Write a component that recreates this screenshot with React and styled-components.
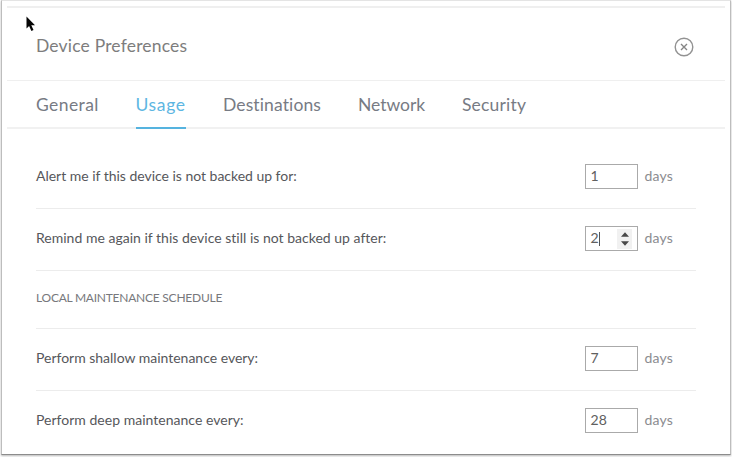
import React from "react";
import styled, { createGlobalStyle } from "styled-components";

const GlobalStyle = createGlobalStyle`
  *, *::before, *::after { box-sizing: border-box; }
  body {
    margin: 0;
    background: #fff;
    font-family: Lato, "Liberation Sans", sans-serif;
    font-variant-ligatures: none;
    overflow: hidden;
  }
`;

const Page = styled.main`
  width: 732px;
  height: 457px;
  padding: 0 1px 2px 1px;
`;

const Panel = styled.section`
  position: relative;
  height: 455px;
  padding: 5px 5px 0;
  border: 1px solid #bdbdbd;
  border-top-color: #e4e4e4;
  border-bottom-color: #8c8c8c;
  background: #fff;
  box-shadow: 0 1px 2px rgba(0, 0, 0, 0.28);
`;

const Header = styled.header`
  display: flex;
  align-items: center;
  justify-content: space-between;
  height: 75px;
  padding: 3px 31px 0 29px;
  border-top: 2px solid #efefef;
  border-bottom: 1px solid #efefef;
`;

const Title = styled.h1`
  margin: 0;
  color: #7d7d7d;
  font-size: 17.5px;
  font-weight: 400;
  line-height: 24px;
  letter-spacing: 0.18px;
`;

const CloseButton = styled.button`
  display: flex;
  padding: 0;
  border: 0;
  background: none;
  margin-top: 3px;
`;

const Tabs = styled.nav`
  display: flex;
  height: 48px;
  padding-left: 29px;
  border-bottom: 2px solid #f1f1f1;
`;

const Tab = styled.a`
  width: ${(p) => p.$width}px;
  height: 48px;
  margin-right: ${(p) => p.$gap}px;
  border-bottom: 2px solid ${(p) => (p.$active ? "#55b3df" : "transparent")};
  color: ${(p) => (p.$active ? "#5db6e2" : "#777b84")};
  font-size: 17.5px;
  line-height: 47px;
  letter-spacing: ${(p) => p.$tracking}px;
  white-space: nowrap;
`;

const Settings = styled.div`
  padding: 18px 29px 0 29px;
`;

const Row = styled.div`
  display: flex;
  align-items: center;
  justify-content: space-between;
  height: 62px;
  padding: 0 23px 2px 0;
  border-bottom: 1px solid ${(p) => (p.$last ? "transparent" : "#ececec")};
`;

const Label = styled.label`
  margin-top: -2px;
  color: #56575b;
  font-size: 14px;
  line-height: 20px;
  letter-spacing: ${(p) => p.$tracking}px;
`;

const SectionHeading = styled.h2`
  height: 58px;
  margin: 0;
  border-bottom: 1px solid #ececec;
  color: #77787c;
  font-size: 12px;
  font-weight: 400;
  line-height: 53px;
  letter-spacing: -0.24px;
`;

const Field = styled.div`
  display: flex;
  align-items: center;
  gap: 6px;
  color: #8b8c90;
  font-size: 14px;
  letter-spacing: 0.2px;
`;

const Unit = styled.span`
  margin-top: -2px;
`;

const NumberBox = styled.div`
  display: flex;
  align-items: center;
  width: 53px;
  height: 25px;
  padding: 0 5px 0 4px;
  border: 1px solid #aaa;
  color: #606060;
  font-size: 14px;
  letter-spacing: 0.3px;
`;

const Value = styled.span`
  margin-top: -1px;
  line-height: 20px;
`;

const Caret = styled.span`
  width: 1px;
  height: 14px;
  background: #555;
`;

const Stepper = styled.span`
  display: flex;
  align-items: center;
  justify-content: center;
  width: 15px;
  height: 20px;
  margin-left: auto;
  background: #f1f1f1;
`;

const Pointer = styled.svg`
  position: absolute;
  top: 15px;
  left: 24px;
`;

const tabs = [
  { name: "General", width: 63, gap: 36.5, tracking: 0.42 },
  { name: "Usage", width: 50, gap: 37.5, tracking: 0.67, active: true },
  { name: "Destinations", width: 98, gap: 37, tracking: 0.12 },
  { name: "Network", width: 67, gap: 37, tracking: -0.04 },
  { name: "Security", width: 65, gap: 0, tracking: 0.18 },
];

function DaysRow({ label, tracking, value, editing, last }) {
  return (
    <Row $last={last}>
      <Label $tracking={tracking}>{label}</Label>
      <Field>
        <NumberBox>
          <Value>{value}</Value>
          {editing && (
            <>
              <Caret />
              <Stepper>
                <svg width="8" height="14" viewBox="0 0 8 14" fill="#484848">
                  <path d="M4 0.3 8 4.7H0Z M4 13.7 0 9.3H8Z" />
                </svg>
              </Stepper>
            </>
          )}
        </NumberBox>
        <Unit>days</Unit>
      </Field>
    </Row>
  );
}

export default function App() {
  return (
    <>
      <GlobalStyle />
      <Page>
        <Panel>
          <Header>
            <Title>Device Preferences</Title>
            <CloseButton aria-label="Close">
              <svg width="20" height="20" viewBox="0 0 20 20" fill="none">
                <circle cx="10" cy="10" r="8.8" stroke="#929292" strokeWidth="1.4" />
                <path d="m7 7 6 6M13 7l-6 6" stroke="#858585" strokeWidth="1.4" />
              </svg>
            </CloseButton>
          </Header>
          <Tabs>
            {tabs.map((tab) => (
              <Tab
                key={tab.name}
                $width={tab.width}
                $gap={tab.gap}
                $tracking={tab.tracking}
                $active={tab.active}
              >
                {tab.name}
              </Tab>
            ))}
          </Tabs>
          <Settings>
            <DaysRow label="Alert me if this device is not backed up for:" tracking={-0.02} value="1" />
            <DaysRow
              label="Remind me again if this device still is not backed up after:"
              tracking={0.01}
              value="2"
              editing
            />
            <SectionHeading>LOCAL MAINTENANCE SCHEDULE</SectionHeading>
            <DaysRow label="Perform shallow maintenance every:" tracking={-0.01} value="7" />
            <DaysRow label="Perform deep maintenance every:" tracking={0.02} value="28" last />
          </Settings>
          <Pointer width="10" height="16" viewBox="0 0 10 16">
            <path d="M0.5 0.5V12.5L3.1 10 5.4 15 7.5 14 5.3 9.2H9Z" fill="#050505" />
          </Pointer>
        </Panel>
      </Page>
    </>
  );
}
